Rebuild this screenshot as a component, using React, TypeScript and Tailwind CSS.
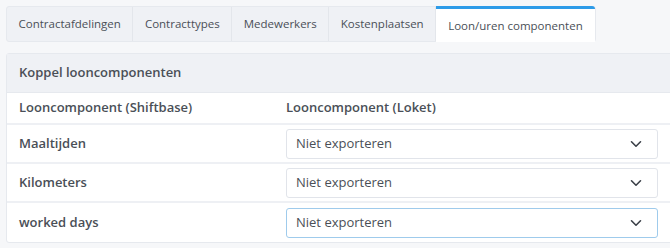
import React from "react";

const tabs = ["Contractafdelingen", "Contracttypes", "Medewerkers", "Kostenplaatsen", "Loon/uren componenten"];
const rows = ["Maaltijden", "Kilometers", "worked days"];

function Chevron() {
  return (
    <svg width="14" height="14" viewBox="0 0 14 14" fill="none" stroke="#3a3f47" strokeWidth="1.6" strokeLinecap="round" strokeLinejoin="round">
      <path d="M2.5 4.8 L7 9.2 L11.5 4.8" />
    </svg>
  );
}

export default function App() {
  return (
    <div className="w-[670px] h-[248px] overflow-hidden bg-[#f6f7f9] text-[#4a4f57]" style={{ fontFamily: '"Open Sans", sans-serif' }}>
      <div className="pt-[6px] pl-[6px]">
        <div className="flex w-fit border border-[#e6e9ee] rounded-[3px] bg-[#eff1f5] h-[36px]">
          {tabs.map((t, i) => {
            const active = i === tabs.length - 1;
            return (
              <div
                key={t}
                className={
                  active
                    ? "flex items-center px-[12px] bg-white border-t-[3px] border-t-[#2d9be8] text-[11.5px] -mt-px rounded-tr-[3px] h-[36px]"
                    : "flex items-center px-[11.5px] border-r border-[#e3e6eb] text-[11.5px]"
                }
              >
                {t}
              </div>
            );
          })}
        </div>
      </div>
      <div className="mt-[11px] ml-[6px] w-[680px] border border-[#e6e9ee] rounded-[3px] bg-white">
        <div className="h-[39px] bg-[#eff1f5] flex items-center pl-[12px] text-[13px] font-semibold border-b border-[#e6e9ee] text-[#4a4f57]">
          Koppel looncomponenten
        </div>
        <div className="h-[32px] flex items-center text-[13px] font-semibold border-b-2 border-[#eef0f4] text-[#4a4f57]">
          <div className="w-[279px] pl-[12px]">Looncomponent (Shiftbase)</div>
          <div>Looncomponent (Loket)</div>
        </div>
        {rows.map((r, i) => (
          <div key={r} className={"h-[39px] flex items-center text-[13px] " + (i < rows.length - 1 ? "border-b-2 border-[#eef0f4]" : "")}>
            <div className="w-[279px] pl-[12px] font-semibold text-[#4a4f57]">{r}</div>
            <div
              className={
                "w-[372px] h-[30px] flex items-center justify-between pl-[9px] pr-[14px] rounded-[3px] border bg-white " +
                (i === rows.length - 1 ? "border-[#9fcbec]" : "border-[#e1e4ea]")
              }
            >
              <span>Niet exporteren</span>
              <Chevron />
            </div>
          </div>
        ))}
      </div>
    </div>
  );
}
